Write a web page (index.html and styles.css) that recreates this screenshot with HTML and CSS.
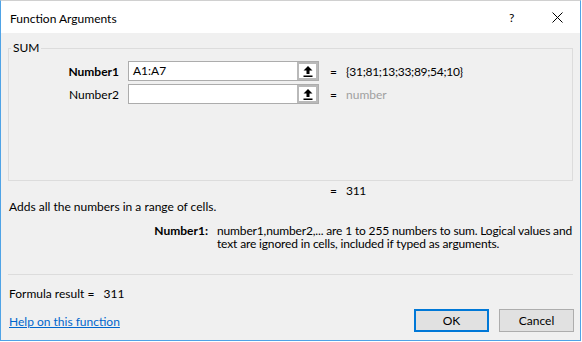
FILE: index.html
```html
<!DOCTYPE html>
<html>
<head>
<meta charset="utf-8">
<link rel="stylesheet" href="styles.css">
</head>
<body>
<div class="window">
  <div class="titlebar">
    <span class="title">Function Arguments</span>
    <span class="help">?</span>
    <span class="close"><svg width="11" height="11" viewBox="0 0 11 11"><path d="M0.5 0.5 L10.5 10.5 M10.5 0.5 L0.5 10.5" stroke="#000" stroke-width="1" fill="none"/></svg></span>
  </div>
  <div class="content">
    <fieldset class="group">
      <legend>SUM</legend>
      <div class="argrow">
        <span class="arglabel bold">Number1</span>
        <div class="field">
          <span class="fieldtext">A1:A7</span>
          <span class="refbtn"><svg width="10" height="12" viewBox="0 0 10 12"><path d="M5 1 L9.5 5.5 L6.5 5.5 L6.5 9 L3.5 9 L3.5 5.5 L0.5 5.5 Z" fill="#000"/><rect x="0.5" y="10.5" width="9" height="1.5" fill="#000"/></svg></span>
        </div>
        <span class="eq">=</span>
        <span class="argval">{31;81;13;33;89;54;10}</span>
      </div>
      <div class="argrow">
        <span class="arglabel">Number2</span>
        <div class="field">
          <span class="fieldtext"></span>
          <span class="refbtn"><svg width="10" height="12" viewBox="0 0 10 12"><path d="M5 1 L9.5 5.5 L6.5 5.5 L6.5 9 L3.5 9 L3.5 5.5 L0.5 5.5 Z" fill="#000"/><rect x="0.5" y="10.5" width="9" height="1.5" fill="#000"/></svg></span>
        </div>
        <span class="eq">=</span>
        <span class="argval hint">number</span>
      </div>
    </fieldset>
    <div class="resultrow">
      <span class="eq">=</span>
      <span class="argval">311</span>
    </div>
    <div class="summary">Adds all the numbers in a range of cells.</div>
    <div class="detail">
      <span class="detaillabel">Number1:</span>
      <span class="detailtext">number1,number2,... are 1 to 255 numbers to sum. Logical values and text are ignored in cells, included if typed as arguments.</span>
    </div>
    <div class="separator"></div>
    <div class="formula">Formula result =&nbsp;&nbsp;&nbsp;311</div>
    <div class="footer">
      <a class="helplink" href="#">Help on this function</a>
      <div class="buttons">
        <button class="btn btn-ok">OK</button>
        <button class="btn">Cancel</button>
      </div>
    </div>
  </div>
</div>
</body>
</html>
```
FILE: styles.css
```css
html, body {
  margin: 0;
  padding: 0;
  background: #ffffff;
}
body {
  font-family: "Segoe UI", Lato, "Noto Sans", sans-serif;
  font-size: 12px;
  color: #000;
}
.window {
  box-sizing: border-box;
  width: 581px;
  height: 341px;
  border: 1px solid #4fa3e6;
  border-top-color: #d0d0d0;
  background: #f0f0f0;
  display: flex;
  flex-direction: column;
}
.titlebar {
  height: 32px;
  background: #ffffff;
  display: flex;
  align-items: center;
  padding-left: 9px;
  flex-shrink: 0;
}
.title {
  font-size: 12px;
  flex: 1;
  padding-top: 2px;
}
.help {
  width: 10px;
  margin-right: 33px;
  font-size: 12px;
  padding-top: 1px;
}
.close {
  display: flex;
  margin-right: 17px;
}
.content {
  padding: 0 7px;
  display: flex;
  flex-direction: column;
}
.group {
  margin: 8px 0 0 0;
  padding: 6px 0 73px 0;
  border: 1px solid #dcdcdc;
  min-width: 0;
}
.group legend {
  padding: 0 2px;
  margin-left: 2px;
  line-height: 14px;
}
.argrow {
  display: flex;
  align-items: center;
  height: 20px;
  margin-bottom: 3px;
}
.arglabel {
  width: 110px;
  text-align: right;
  margin-right: 9px;
}
.bold {
  font-weight: bold;
}
.field {
  box-sizing: border-box;
  width: 191px;
  height: 20px;
  border: 1px solid #acacac;
  background: #fff;
  display: flex;
}
.fieldtext {
  flex: 1;
  padding-left: 4px;
  line-height: 18px;
}
.refbtn {
  box-sizing: border-box;
  width: 21px;
  height: 18px;
  border: 2px solid #b9b9b9;
  background: #fff;
  display: flex;
  align-items: center;
  justify-content: center;
}
.eq {
  margin-left: 11px;
  width: 16px;
}
.argval {
  white-space: nowrap;
  letter-spacing: -0.3px;
}
.hint {
  color: #a0a0a0;
  letter-spacing: 0;
}
.resultrow {
  display: flex;
  line-height: 14px;
  margin-top: 3px;
  padding-left: 311px;
}
.summary {
  line-height: 14px;
  margin-top: 2px;
  padding-left: 1px;
}
.detail {
  display: flex;
  margin-top: 10px;
  line-height: 13px;
}
.detaillabel {
  width: 200px;
  text-align: right;
  font-weight: bold;
  padding-right: 9px;
  flex-shrink: 0;
}
.detailtext {
  flex: 1;
  margin-right: -6px;
  letter-spacing: -0.15px;
}
.separator {
  height: 1px;
  background: #dcdcdc;
  margin-top: 24px;
}
.formula {
  line-height: 14px;
  margin-top: 12px;
  padding-left: 1px;
}
.footer {
  display: flex;
  align-items: center;
  margin-top: 8px;
  padding-left: 1px;
}
.helplink {
  flex: 1;
  color: #0066cc;
  text-decoration: underline;
  margin-top: 2px;
}
.buttons {
  display: flex;
  gap: 10px;
  margin-right: -1px;
}
.btn {
  box-sizing: border-box;
  width: 75px;
  height: 23px;
  border: 1px solid #adadad;
  background: #e1e1e1;
  font-family: inherit;
  font-size: 12px;
  color: #000;
  padding: 0;
}
.btn-ok {
  border: 2px solid #0078d7;
}
```
